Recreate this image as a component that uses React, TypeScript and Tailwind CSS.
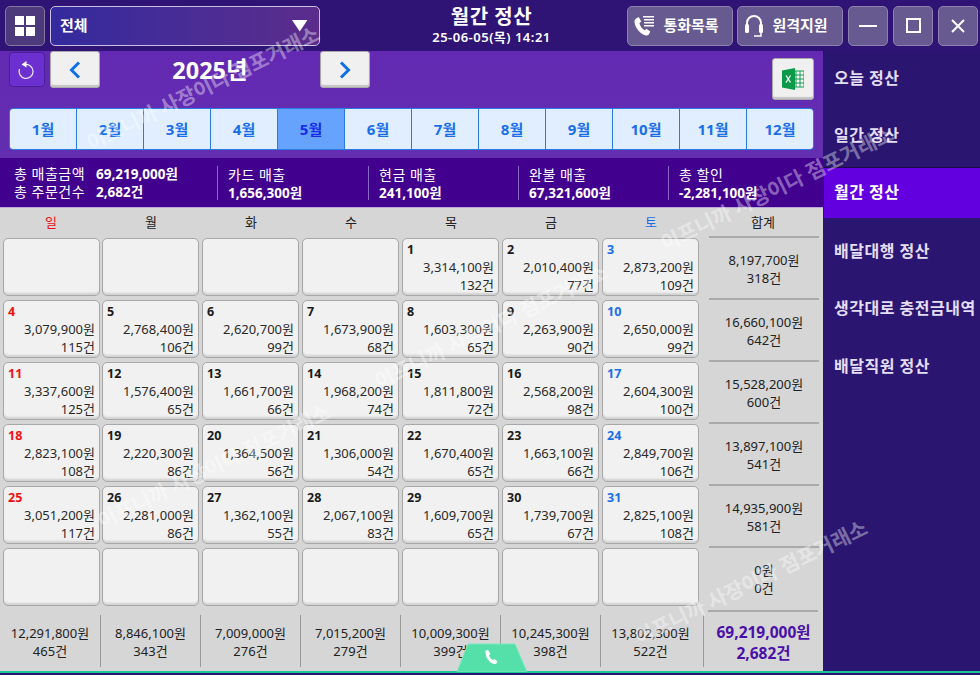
import { ReactNode } from "react";

const FONT = "font-['Noto_Sans','Noto_Sans_CJK_KR',sans-serif]";

const months = ["1월", "2월", "3월", "4월", "5월", "6월", "7월", "8월", "9월", "10월", "11월", "12월"];
const weekDays = ["일", "월", "화", "수", "목", "금", "토"];

type Day = { d: number; won: string; cnt: string } | null;

const weeks: { days: Day[]; won: string; cnt: string }[] = [
  {
    days: [
      null,
      null,
      null,
      null,
      { d: 1, won: "3,314,100원", cnt: "132건" },
      { d: 2, won: "2,010,400원", cnt: "77건" },
      { d: 3, won: "2,873,200원", cnt: "109건" },
    ],
    won: "8,197,700원",
    cnt: "318건",
  },
  {
    days: [
      { d: 4, won: "3,079,900원", cnt: "115건" },
      { d: 5, won: "2,768,400원", cnt: "106건" },
      { d: 6, won: "2,620,700원", cnt: "99건" },
      { d: 7, won: "1,673,900원", cnt: "68건" },
      { d: 8, won: "1,603,300원", cnt: "65건" },
      { d: 9, won: "2,263,900원", cnt: "90건" },
      { d: 10, won: "2,650,000원", cnt: "99건" },
    ],
    won: "16,660,100원",
    cnt: "642건",
  },
  {
    days: [
      { d: 11, won: "3,337,600원", cnt: "125건" },
      { d: 12, won: "1,576,400원", cnt: "65건" },
      { d: 13, won: "1,661,700원", cnt: "66건" },
      { d: 14, won: "1,968,200원", cnt: "74건" },
      { d: 15, won: "1,811,800원", cnt: "72건" },
      { d: 16, won: "2,568,200원", cnt: "98건" },
      { d: 17, won: "2,604,300원", cnt: "100건" },
    ],
    won: "15,528,200원",
    cnt: "600건",
  },
  {
    days: [
      { d: 18, won: "2,823,100원", cnt: "108건" },
      { d: 19, won: "2,220,300원", cnt: "86건" },
      { d: 20, won: "1,364,500원", cnt: "56건" },
      { d: 21, won: "1,306,000원", cnt: "54건" },
      { d: 22, won: "1,670,400원", cnt: "65건" },
      { d: 23, won: "1,663,100원", cnt: "66건" },
      { d: 24, won: "2,849,700원", cnt: "106건" },
    ],
    won: "13,897,100원",
    cnt: "541건",
  },
  {
    days: [
      { d: 25, won: "3,051,200원", cnt: "117건" },
      { d: 26, won: "2,281,000원", cnt: "86건" },
      { d: 27, won: "1,362,100원", cnt: "55건" },
      { d: 28, won: "2,067,100원", cnt: "83건" },
      { d: 29, won: "1,609,700원", cnt: "65건" },
      { d: 30, won: "1,739,700원", cnt: "67건" },
      { d: 31, won: "2,825,100원", cnt: "108건" },
    ],
    won: "14,935,900원",
    cnt: "581건",
  },
  { days: [null, null, null, null, null, null, null], won: "0원", cnt: "0건" },
];

const dayTotals = [
  ["12,291,800원", "465건"],
  ["8,846,100원", "343건"],
  ["7,009,000원", "276건"],
  ["7,015,200원", "279건"],
  ["10,009,300원", "399건"],
  ["10,245,300원", "398건"],
  ["13,802,300원", "522건"],
];

const sideMenu = ["오늘 정산", "일간 정산", "월간 정산", "배달대행 정산", "생각대로 충전금내역", "배달직원 정산"];

function HeaderBtn({ children, className }: { children: ReactNode; className: string }) {
  return (
    <button className={`h-10 flex items-center justify-center gap-[8px] rounded-[5px] border border-[#8d82ad] bg-[#665a90] text-white ${className}`}>
      {children}
    </button>
  );
}

function Watermark({ className }: { className: string }) {
  return (
    <div className={`absolute pointer-events-none whitespace-nowrap text-[20.5px] font-bold text-white/40 -rotate-[26deg] origin-left ${className}`}>
      이프니까 사장이다 점포거래소
    </div>
  );
}

function DayCell({ day, sun, sat, className }: { day: Day; sun: boolean; sat: boolean; className: string }) {
  const color = sun ? "text-[#f01010]" : sat ? "text-[#1a6fe8]" : "text-[#1a1a1a]";
  return (
    <div className={`w-[97px] h-[58px] mr-[3px] shrink-0 rounded-[5px] border border-[#a8a8a8] bg-[#f1f1f1] shadow-[inset_0_-3px_2px_-1px_#d0d0d0] pl-[4px] pr-[4px] pt-[3px] text-[13px] leading-[18px] text-[#2a2a2a] ${className}`}>
      {day && (
        <>
          <div className={`text-[12.5px] leading-[16px] font-bold ${color}`}>{day.d}</div>
          <div className="text-right">{day.won}</div>
          <div className="text-right">{day.cnt}</div>
        </>
      )}
    </div>
  );
}

function SummaryItem({ label, value, className }: { label: string; value: string; className: string }) {
  return (
    <div className={`h-[34px] border-l border-[#8a68c8] pl-[10px] text-[13.5px] leading-[18px] text-white ${className}`}>
      <div className="text-[14px] tracking-[0.5px]">{label}</div>
      <div className="font-bold">{value}</div>
    </div>
  );
}

export default function App() {
  return (
    <div className={`${FONT} relative w-[980px] h-[675px] overflow-hidden bg-[#2a1670]`}>
      {/* top bar */}
      <header className="h-[51px] flex items-center bg-[#2f1475] shadow-[0_1px_2px_#1b0b50]">
        <button className="ml-[5px] w-10 h-10 flex items-center justify-center rounded-[5px] border border-[#83779f] bg-[#4d3a7c]">
          <svg width="20" height="20" viewBox="0 0 20 20" fill="#fff">
            <rect x="0" y="0" width="9" height="9" />
            <rect x="11" y="0" width="9" height="9" />
            <rect x="0" y="11" width="9" height="9" />
            <rect x="11" y="11" width="9" height="9" />
          </svg>
        </button>
        <div className="ml-[5px] w-[270px] h-10 flex items-center justify-between rounded-[5px] border border-[#c8c0e0] bg-gradient-to-r from-[#332a9e] to-[#5c2c8c] pl-[9px] pr-[11px] text-white">
          <span className="text-[15px] font-bold">전체</span>
          <svg width="16" height="13" viewBox="0 0 16 13" fill="#fff">
            <path d="M0 1h15.500L7.750 12.500z" />
          </svg>
        </div>
        <div className="w-[307px] pl-[36px] text-center text-white">
          <div className="text-[20px] leading-[24px] font-bold tracking-[0.5px]">월간 정산</div>
          <div className="text-[13px] leading-[17px] font-semibold tracking-[0.5px]">25-06-05(목) 14:21</div>
        </div>
        <div className="flex items-center gap-[4px]">
          <HeaderBtn className="w-[106px] pr-[8px]">
            <svg width="22" height="22" viewBox="0 0 22 22" fill="#fff">
              <path d="M3 3.500 5.800 2l2.400 4.500-1.800 1.700c.6 2.800 2.700 5.700 5.300 7l1.800-1.500 3.800 2.800-1.500 3c-1.100 1-2.600 1.100-3.800.7C6.200 18.200 1.400 11.800 1.500 6.300c0-1.100.7-2.100 1.500-2.800z" />
              <rect x="10" y="1" width="11" height="1.500" />
              <rect x="11" y="4" width="10" height="1.500" />
              <rect x="11" y="7" width="10" height="1.500" />
              <rect x="11" y="10" width="10" height="1.500" />
            </svg>
            <span className="text-[15px] font-semibold">통화목록</span>
          </HeaderBtn>
          <HeaderBtn className="w-[106px] pr-[8px]">
            <svg width="20" height="24" viewBox="0 0 20 24" fill="none" stroke="#fff">
              <path d="M3 13V9a7 7 0 0 1 14 0v4" strokeWidth="2" />
              <rect x="1" y="10" width="4" height="9" rx="1.500" fill="#fff" stroke="none" />
              <rect x="15" y="10" width="4" height="9" rx="1.500" fill="#fff" stroke="none" />
              <path d="M17 19v3h-7" strokeWidth="1.500" />
            </svg>
            <span className="text-[15px] font-semibold">원격지원</span>
          </HeaderBtn>
          <HeaderBtn className="w-10 ml-[1px]">
            <span className="block w-[18px] h-[2px] bg-white" />
          </HeaderBtn>
          <HeaderBtn className="w-10 ml-[1px]">
            <span className="block w-[15px] h-[15px] border-2 border-white" />
          </HeaderBtn>
          <HeaderBtn className="w-10 ml-[1px]">
            <svg width="16" height="16" viewBox="0 0 16 16" stroke="#fff" strokeWidth="2">
              <path d="M2 2l12 12M14 2 2 14" />
            </svg>
          </HeaderBtn>
        </div>
      </header>

      <div className="flex h-[620px]">
        <main className="w-[823px] flex flex-col">
          {/* year + months */}
          <section className="h-[107px] bg-gradient-to-b from-[#6329b2] to-[#632eb0] px-[9px]">
            <div className="h-[57px] flex items-start">
              <button className="mt-[1px] w-9 h-[35px] flex items-center justify-center rounded-[4px] border border-[#4a1f9a] bg-[#6c2fd0]">
                <svg width="20" height="20" viewBox="0 0 20 20" fill="none" stroke="#e8e0f8" strokeWidth="1.300">
                  <path d="M8 4.500a7 7 0 1 1-5.500 4.500" />
                  <path d="M9.500 1 4.500 4.500l5 3z" fill="#fff" stroke="none" />
                </svg>
              </button>
              <button className="ml-[5px] w-[50px] h-[37px] flex items-center justify-center rounded-[3px] border border-[#aaa] bg-[#f0f0f0] shadow-[inset_0_-2px_1px_#c4c4c4]">
                <svg width="12" height="18" viewBox="0 0 12 18" fill="none" stroke="#0f6fe8" strokeWidth="3">
                  <path d="M10 1.500 2.500 9l7.500 7.500" />
                </svg>
              </button>
              <div className="w-[220px] mt-[3px] text-center text-[23.5px] leading-[32px] font-bold text-white">2025년</div>
              <button className="w-[50px] h-[37px] flex items-center justify-center rounded-[3px] border border-[#aaa] bg-[#f0f0f0] shadow-[inset_0_-2px_1px_#c4c4c4]">
                <svg width="12" height="18" viewBox="0 0 12 18" fill="none" stroke="#0f6fe8" strokeWidth="3">
                  <path d="M2 1.500 9.500 9 2 16.500" />
                </svg>
              </button>
              <button className="ml-auto mt-[7px] w-[42px] h-[42px] flex items-center justify-center rounded-[3px] border border-[#aaa] bg-[#f0f0f0] shadow-[inset_0_-2px_1px_#c4c4c4]">
                <svg width="22" height="22" viewBox="0 0 22 22">
                  <rect x="8" y="3" width="14" height="16" fill="#fff" stroke="#0a9a4a" />
                  <path d="M14 3v16M18 3v16M8 7h14M8 11h14M8 15h14" stroke="#0a9a4a" strokeWidth="1" />
                  <path d="M0 2.500 13 0v22L0 19.500z" fill="#0a9a4a" />
                  <path d="m4 7.500 4.500 7M8.500 7.500l-4.500 7" stroke="#fff" strokeWidth="1.300" />
                </svg>
              </button>
            </div>
            <div className="flex h-[42px] rounded-[4px] overflow-hidden border border-[#2a7be8]">
              {months.map((m, i) => (
                <div
                  key={m}
                  className={`flex-1 flex items-center justify-center text-[15px] font-bold ${i > 0 ? "border-l border-[#2a7be8]" : ""} ${
                    m === "5월" ? "bg-[#66a3ff] text-[#1a2be8]" : "bg-[#e0eeff] text-[#1a6fe8]"
                  }`}
                >
                  {m}
                </div>
              ))}
            </div>
          </section>

          {/* summary */}
          <section className="h-[49px] flex items-center bg-[#42008f]">
            <div className="w-[217px] pl-[14px] text-[13.5px] leading-[18px] text-white">
              <div className="flex">
                <span className="w-[82px] text-[14px] tracking-[0.5px]">총 매출금액</span>
                <span className="font-bold">69,219,000원</span>
              </div>
              <div className="flex">
                <span className="w-[82px] text-[14px] tracking-[0.5px]">총 주문건수</span>
                <span className="font-bold">2,682건</span>
              </div>
            </div>
            <SummaryItem className="w-[151px]" label="카드 매출" value="1,656,300원" />
            <SummaryItem className="w-[150px]" label="현금 매출" value="241,100원" />
            <SummaryItem className="w-[150px]" label="완불 매출" value="67,321,600원" />
            <SummaryItem className="w-[150px]" label="총 할인" value="-2,281,100원" />
          </section>

          {/* calendar */}
          <section className="flex-1 bg-[#d6d6d6] border-t border-[#b9a8d8] pl-[3px]">
            <div className="h-[30px] flex items-center text-[13px] text-[#222]">
              {weekDays.map((w, i) => (
                <div
                  key={w}
                  className={`w-[100px] text-center -translate-x-[2px] ${i === 0 ? "text-[#f01010]" : i === 6 ? "text-[#1a6fe8]" : ""}`}
                >
                  {w}
                </div>
              ))}
              <div className="ml-[5px] w-[110px] text-center">합계</div>
            </div>
            {weeks.map((wk, r) => (
              <div key={r} className="flex h-[62px]">
                {wk.days.map((day, i) => (
                  <DayCell key={i} day={day} sun={i === 0} sat={i === 6} className={i === 1 ? "-ml-[1px]" : ""} />
                ))}
                <div className="ml-[7px] -mt-[2px] pt-[1px] h-[62px] w-[110px] flex flex-col items-center justify-center border-t-2 border-[#aaa] text-[13px] leading-[18px] text-[#222]">
                  <div>{wk.won}</div>
                  <div>{wk.cnt}</div>
                </div>
              </div>
            ))}
            <div className="-ml-[3px]">
              <div className="ml-[708px] w-[110px] h-[5px] border-t-2 border-[#aaa]" />
              <div className="flex h-[52px] text-[13px] leading-[18px] text-[#222]">
                {dayTotals.map(([won, cnt], i) => (
                  <div key={i} className={`w-[100px] pt-[2px] flex flex-col items-center justify-center ${i > 0 ? "border-l border-[#999]" : ""}`}>
                    <div>{won}</div>
                    <div>{cnt}</div>
                  </div>
                ))}
                <div className="ml-[3px] pt-[4px] border-l border-[#999] w-[120px] flex flex-col items-center justify-center text-[15.5px] leading-[21px] font-bold text-[#4a10a8]">
                  <div>69,219,000원</div>
                  <div>2,682건</div>
                </div>
              </div>
            </div>
          </section>
        </main>

        {/* side menu */}
        <aside className="ml-[1px] w-[156px] bg-[#2a1670] text-[16px] font-semibold text-[#e4def5] tracking-[0.5px]">
          <div className="-mt-[2px]">
            {sideMenu.map((s, i) => (
              <div
                key={s}
                className={`flex items-center pl-[10px] h-[57.6px] whitespace-nowrap ${
                  i === 2 ? "bg-[#6200e0] text-white border-t-[3px] border-b-[4px] border-[#2a1670] shadow-[inset_0_1px_0_#1a0b48]" : ""
                }`}
              >
                {s}
              </div>
            ))}
          </div>
        </aside>
      </div>

      {/* bottom line */}
      <div className="h-[2px] bg-[#1ec79a]" />

      {/* call tab */}
      <div className="absolute left-[457px] top-[643px] w-[70px] h-[29px]">
        <svg width="70" height="29" viewBox="0 0 70 29">
          <path d="M11 1h47l12 28H0z" fill="#54e0a8" stroke="#7ae8c0" />
          <path d="M28 8l3-1 2.500 4-1.500 1.500c.5 1.500 2 3.500 4 4.500l1.500-1 3 2.500-1.500 2.500c-5 1-11-6-10.500-12.500z" fill="#fff" />
        </svg>
      </div>

      <Watermark className="left-[88px] top-[129px]" />
      <Watermark className="left-[662px] top-[229px]" />
      <Watermark className="left-[99px] top-[507px]" />
      <Watermark className="left-[376px] top-[367px]" />
      <Watermark className="left-[636px] top-[623px]" />
    </div>
  );
}
